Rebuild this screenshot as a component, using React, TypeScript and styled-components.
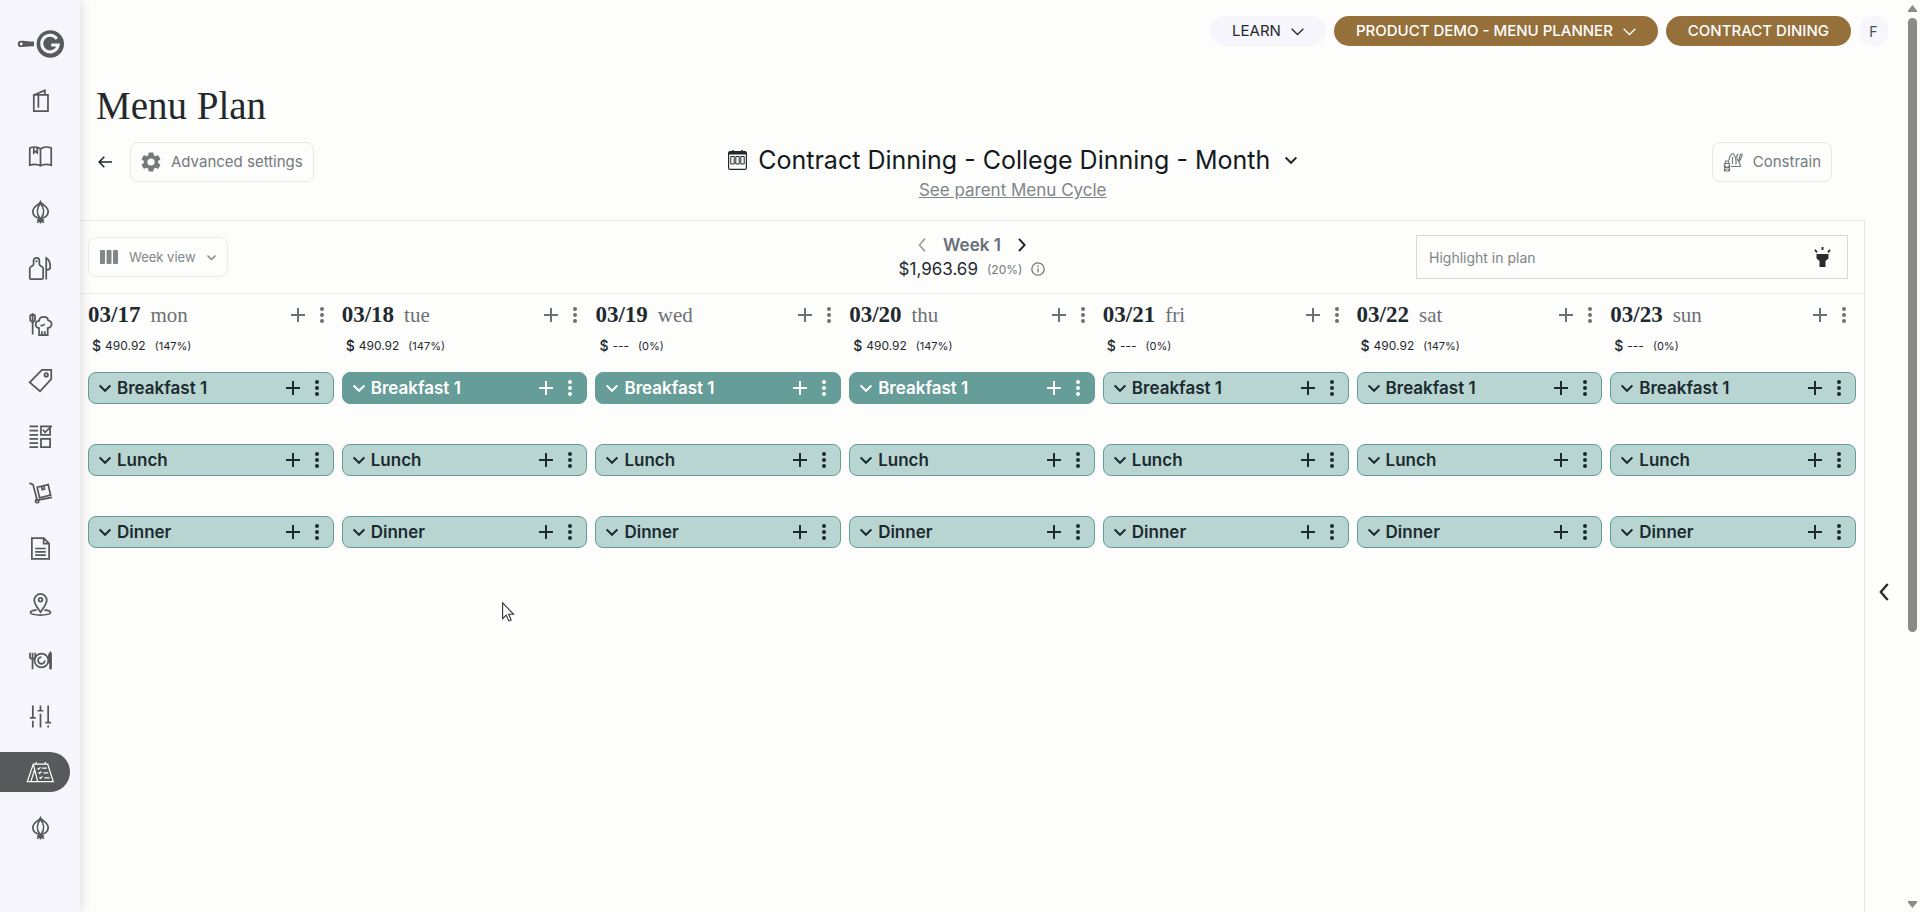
import React from "react";
import styled, { createGlobalStyle, css } from "styled-components";

const sans = `Inter, "Liberation Sans", sans-serif`;
const serif = `"Liberation Serif", "DejaVu Serif", serif`;

const GlobalStyle = createGlobalStyle`
  *, *::before, *::after { box-sizing: border-box; }
  body { margin: 0; background: #fdfdfc; color: #1f2a30; font-family: ${sans}; }
  button, input, select { font-family: inherit; color: inherit; }
  button { background: none; border: 0; padding: 0; cursor: pointer; }
`;

/* ---------- icons ---------- */

const Stroke = styled.svg<{ $w?: number }>`
  display: block;
  flex: none;
  fill: none;
  stroke: currentColor;
  stroke-width: ${(p) => p.$w ?? 2};
`;

const Solid = styled.svg`
  display: block;
  flex: none;
  fill: currentColor;
`;

const ChevronDown = ({ size = 12, w = 2 }: { size?: number; w?: number }) => (
  <Stroke $w={w} width={size} height={size} viewBox="0 0 12 12" aria-hidden>
    <path d="M.6 3.4 6 8.8l5.4-5.4" />
  </Stroke>
);

const ChevronLeft = ({ height = 14, w = 1.6 }: { height?: number; w?: number }) => (
  <Stroke $w={w} width={height / 2 + 1} height={height} viewBox="0 0 8 14" aria-hidden>
    <path d="M7 .6 1.4 7 7 13.4" />
  </Stroke>
);

const ChevronRight = () => (
  <Stroke $w={2} width={8} height={14} viewBox="0 0 8 14" aria-hidden>
    <path d="M1 .8 6.600 7 1 13.200" />
  </Stroke>
);

const Plus = () => (
  <Stroke $w={2} width={14} height={14} viewBox="0 0 14 14" aria-hidden>
    <path d="M7 0v14M0 7h14" />
  </Stroke>
);

const Dots = () => (
  <Solid width={4} height={16} viewBox="0 0 4 16" aria-hidden>
    <circle cx="2" cy="2" r="2" />
    <circle cx="2" cy="8" r="2" />
    <circle cx="2" cy="14" r="2" />
  </Solid>
);

const onion = (
  <>
    <path d="M12 .8C10.400 4 4 5.600 4 11c0 4 3.300 7 8 7s8-3 8-7c0-5.400-6.400-7-8-10.200z" />
    <path d="M12 2.500c-4 4.500-4.200 10.500-.8 15.500M12 2.500c4 4.500 4.200 10.500.8 15.500" />
    <path d="M12 17.500V23.500M8.500 22.500l3.500-3 3.500 3M8.500 19.800h7" />
  </>
);

const navItems: { name: string; icon: React.ReactNode }[] = [
  {
    name: "Menus",
    icon: <path d="M5 6.200h14.800V23H5zM9.800 6.500v13M5 6.200 16.500 1.400V6" />,
  },
  {
    name: "Cookbooks",
    icon: (
      <>
        <path d="M12 4.200C9 1.800 4 1.800.8 3.200V21c3.200-1 8.200-1 11.200.6 3-1.600 8-1.600 11.200-.6V3.200C20 1.800 15 1.800 12 4.200zM12 4.200V21.500" />
        <path d="M5 2.800v5.400l1.800-1.500 1.800 1.500V2.600" />
      </>
    ),
  },
  { name: "Ingredients", icon: onion },
  {
    name: "Preparation",
    icon: (
      <>
        <path d="M2.500 23.200c-1 0-1.700-.5-1.700-1.500V12c0-2 4-2.500 4-4.500V3.600c0-3.600 6-3.600 6 0v3.900c0 2 4 2.500 4 4.500v9.700c0 1-.7 1.500-1.700 1.500z" />
        <path d="M7.800 3.500v2M18 23.500V1c2.900 1.500 4.200 5 4.200 9.500 0 2-1 3-3.700 3" />
      </>
    ),
  },
  {
    name: "Recipes",
    icon: (
      <>
        <path d="M3.800 10v12.500M1.300 2.500v5.200l2.500 2.300 2.500-2.300V2.500L3.800 1zM3.800 2v7" />
        <path d="M10.500 23.200v-7.500c-4.500-.5-5-7 0-7.500.5-5.500 9-5.500 9.500-.5 5 1 4.500 7.500-.5 8v7.500zM13.500 19v4M16.500 19v4M12 13c2.200.5 3.600-.4 4.200-1.800" />
      </>
    ),
  },
  {
    name: "Prices",
    icon: (
      <>
        <path d="M.8 14 13.500 1H23.200v9.500L11.500 23.200z" />
        <circle cx="18" cy="6.200" r="1.800" />
      </>
    ),
  },
  {
    name: "Inventory",
    icon: (
      <>
        <path d="M.5 1.500h9M.5 5.800h9M.5 10.200h9M.5 14.500h9M.5 18.800h9M.5 23h9M12.500 1.500h9.500v8.700h-9.500zM12.500 14.500h9.500V23h-9.500z" />
        <path d="m14.500 5 2.300 2.600L23.800.8" />
      </>
    ),
  },
  {
    name: "Orders",
    icon: (
      <>
        <path d="M.5 2.200 4.200 3.800 8.500 20 24 17" />
        <circle cx="8.500" cy="21" r="1.700" />
        <path d="m8.500 6.500 11.500-2.700 2.500 11-11.500 2.700zM13 5.500l.8 3.600 2.400-.6-.8-3.500" />
      </>
    ),
  },
  {
    name: "Reports",
    icon: <path d="M3 1.200h12.500L21 7v15.800H3zM15.300 1.200V7H21M6.500 12h11M6.500 15.500h11M6.500 19h11" />,
  },
  {
    name: "Locations",
    icon: (
      <>
        <path d="M12 20C9.500 16 5.500 11.800 5.500 7.500a6.500 6.500 0 0 1 13 0c0 4.300-4 8.500-6.500 12.500z" />
        <circle cx="12" cy="7" r="2" />
        <path d="M8 17.500c-9.500 1-9 5.500 4 5.500s13.500-4.500 4-5.500" />
      </>
    ),
  },
  {
    name: "Catering",
    icon: (
      <>
        <circle cx="13" cy="12" r="7.200" />
        <path d="M13 8.500a3.500 3.500 0 1 0 3.500 3.500" />
        <path d="M1 4v4.500c0 2 5.500 2 5.500 0V4M3.700 4v17M22 21V4c-1.500 1.500-1.800 5-1.200 10H22M23 4v17" />
      </>
    ),
  },
  {
    name: "Settings",
    icon: <path d="M4 .5v12M1 13.500h6M4 16.500v7M12 .5v5.500M9 6h6M12 9v14.500M20 .5v17M17 18.500h6M20 21.500v2" />,
  },
  {
    name: "Menu planner",
    icon: (
      <>
        <path d="M4.500 3.200H19.500L25.300 21.500H-1.800zM4.500 3.200 9 21.500M2 21.500 5.800 9M7.500 1v3M17 1v3" />
        <path d="m9 7.500 1 1 2-2M13.500 7.500h5M10 12l1 1 2-2M15 12.500h5M11 17l1 1 2-2M16 17.500h5.500" />
      </>
    ),
  },
  { name: "Products", icon: onion },
];

/* ---------- shell ---------- */

const Page = styled.div`
  display: flex;
  min-height: 100vh;
  border-bottom: 1px solid #33373a;
`;

const Sidebar = styled.nav`
  flex: 0 0 80px;
  background: #f6f6fc;
  box-shadow: 2px 0 10px rgba(40, 50, 50, 0.14);
  padding: 30px 0 0;
  z-index: 1;
`;

const Logo = styled.a`
  display: block;
  color: #58595b;
  padding-left: 17px;
  height: 50px;
`;

const NavList = styled.ul`
  list-style: none;
  margin: 0;
  padding: 0;
  display: flex;
  flex-direction: column;
  gap: 16px;
`;

const NavLink = styled.a<{ $active: boolean }>`
  display: flex;
  align-items: center;
  width: 70px;
  height: 40px;
  padding-left: 29px;
  border-radius: 0 20px 20px 0;
  color: ${(p) => (p.$active ? "#ffffff" : "#55575a")};
  background: ${(p) => (p.$active ? "#58595b" : "transparent")};
`;

const Main = styled.main`
  flex: 1;
  min-width: 0;
  display: flex;
  flex-direction: column;
`;

const TopBar = styled.header`
  display: flex;
  justify-content: flex-end;
  gap: 8px;
  padding: 16px 20px 0 0;
`;

const Pill = styled.button<{ $tone?: "brown" }>`
  display: flex;
  align-items: center;
  gap: 10px;
  height: 30px;
  padding: 0 22px;
  border-radius: 15px;
  font-size: 15px;
  line-height: 20px;
  font-weight: 400;
  color: #24292c;
  background: #f6f6fc;
  ${(p) =>
    p.$tone === "brown" &&
    css`
      color: #ffffff;
      background: #96703a;
      font-weight: 500;
    `}
`;

const Avatar = styled.button`
  width: 29px;
  height: 30px;
  border-radius: 15px;
  background: #f6f6fc;
  color: #4a4f52;
  font-size: 14px;
`;

const PageTitle = styled.h1`
  margin: 36px 0 0;
  padding-left: 16px;
  font: 400 39px/48px ${serif};
  color: #23282c;
`;

const PlanHeader = styled.div`
  display: flex;
  justify-content: space-between;
  align-items: flex-start;
  height: 90px;
  padding: 12px 76px 0 18px;
`;

const HeaderGroup = styled.div`
  display: flex;
  align-items: center;
  gap: 18px;
`;

const OutlineButton = styled.button`
  display: flex;
  align-items: center;
  gap: 10px;
  height: 40px;
  padding: 0 10px;
  border: 1px solid #e6e7eb;
  border-radius: 8px;
  font-size: 15px;
  line-height: 20px;
  color: #74797c;
`;

const PlanTitle = styled.div`
  display: flex;
  flex-direction: column;
  align-items: center;
  gap: 4px;
`;

const PlanPicker = styled.label`
  display: flex;
  align-items: center;
  gap: 11px;
  padding-top: 2px;
  color: #23282c;
`;

const PlainSelect = styled.select`
  appearance: none;
  border: 0;
  background: none;
  padding: 0;
  outline: 0;
  font-size: inherit;
  line-height: inherit;
`;

const PlanSelect = styled(PlainSelect)`
  font-size: 25px;
  line-height: 32px;
  color: #14191d;
  margin-right: 3px;
`;

const ParentLink = styled.a`
  font-size: 17px;
  line-height: 20px;
  color: #80868a;
`;

/* ---------- plan body ---------- */

const Body = styled.div`
  flex: 1;
  display: flex;
`;

const Plan = styled.section`
  flex: 1;
  min-width: 0;
  border-top: 1px solid #e8e9ec;
  border-right: 1px solid #e5e6ea;
`;

const PanelRail = styled.aside`
  flex: 0 0 43px;
  display: flex;
  align-items: center;
  padding: 52px 0 0 6px;
`;

const RailButton = styled.button`
  padding: 8px;
  color: #222729;
`;

const Toolbar = styled.div`
  display: grid;
  grid-template-columns: 1fr auto 1fr;
  height: 73px;
  padding: 14px 8px 0;
  border-bottom: 1px solid #ecedef;
`;

const ViewPicker = styled.label`
  display: flex;
  align-items: center;
  gap: 11px;
  justify-self: start;
  height: 40px;
  padding: 0 11px;
  margin-top: 2px;
  border: 1px solid #e9ebf1;
  border-radius: 8px;
  font-size: 13px;
  line-height: 16px;
  color: #81868a;
`;

const WeekSummary = styled.div`
  display: flex;
  flex-direction: column;
  align-items: center;
`;

const WeekNav = styled.div`
  display: flex;
  align-items: center;
  gap: 17px;
  height: 20px;
  font-size: 17px;
  font-weight: 600;
  color: #667077;
`;

const ArrowButton = styled.button<{ $dim?: boolean }>`
  color: ${(p) => (p.$dim ? "#9a9fa3" : "#23282c")};
`;

const Cost = styled.div`
  display: flex;
  align-items: center;
  gap: 9px;
  margin-top: 2px;
  height: 24px;
  font-size: 17px;
  color: #1f2a30;
`;

const Share = styled.span`
  display: flex;
  align-items: center;
  gap: 9px;
  font-size: 12px;
  color: #70777b;
`;

const SearchBox = styled.div`
  display: flex;
  align-items: center;
  justify-self: end;
  width: 432px;
  max-width: 100%;
  height: 44px;
  margin-right: 8px;
  padding: 0 16px 0 12px;
  border: 1px solid #d9dadb;
`;

const SearchInput = styled.input`
  flex: 1;
  min-width: 0;
  border: 0;
  padding: 0;
  background: none;
  outline: 0;
  font-size: 14px;
  &::placeholder { color: #7f8487; opacity: 1; }
`;

const SearchButton = styled.button`
  color: #2a2c2e;
`;

const Days = styled.div`
  display: grid;
  grid-template-columns: repeat(7, minmax(0, 1fr));
  gap: 8px;
  padding: 7px 8px 0;
`;

const DayHead = styled.div`
  display: flex;
  align-items: center;
  height: 28px;
  padding-right: 10px;
  color: #6b7175;
  font-family: ${serif};
`;

const DayDate = styled.span`
  font-size: 23px;
  font-weight: 700;
  color: #1f2a30;
`;

const DayName = styled.span`
  flex: 1;
  padding-left: 10px;
  font-size: 21px;
`;

const Tools = styled.span`
  display: flex;
  align-items: center;
  gap: 15px;
`;

const DayCost = styled.div`
  display: flex;
  align-items: center;
  gap: 4px;
  height: 16px;
  margin: 9px 0 18px;
  padding-left: 4px;
  font-size: 12px;
  line-height: 16px;
`;

const Currency = styled.span`
  font-size: 14px;
  font-weight: 500;
`;

const DayShare = styled.span`
  padding-left: 5px;
  font-size: 11px;
`;

const Meals = styled.div`
  display: flex;
  flex-direction: column;
  gap: 40px;
`;

const MealBar = styled.div<{ $selected: boolean }>`
  display: flex;
  align-items: center;
  height: 32px;
  padding: 0 14px 0 10px;
  border: 1px solid #659d97;
  border-radius: 8px;
  background: ${(p) => (p.$selected ? "#679d98" : "#b9d5d2")};
  color: ${(p) => (p.$selected ? "#ffffff" : "#1c2b30")};
`;

const MealToggle = styled.button`
  flex: 1;
  display: flex;
  align-items: center;
  gap: 6px;
  font-size: 17px;
  line-height: 20px;
  font-weight: 600;
`;

const Scrollbar = styled.div`
  flex: 0 0 12px;
  height: 100vh;
  display: flex;
  flex-direction: column;
  color: #8b8b8c;
  padding: 5px 3px 4px 0;
`;

const Track = styled.div`
  flex: 1;
  padding: 6px 0;
`;

const Thumb = styled.div`
  height: 70%;
  border-radius: 5px;
  background: #8b8b8c;
`;

const Pointer = styled.svg`
  position: absolute;
  left: 502px;
  top: 602px;
`;

const days = [
  { date: "03/17", day: "mon", cost: "490.92", share: "(147%)" },
  { date: "03/18", day: "tue", cost: "490.92", share: "(147%)", selected: true },
  { date: "03/19", day: "wed", cost: "---", share: "(0%)", selected: true },
  { date: "03/20", day: "thu", cost: "490.92", share: "(147%)", selected: true },
  { date: "03/21", day: "fri", cost: "---", share: "(0%)" },
  { date: "03/22", day: "sat", cost: "490.92", share: "(147%)" },
  { date: "03/23", day: "sun", cost: "---", share: "(0%)" },
];

const meals = ["Breakfast 1", "Lunch", "Dinner"];

const ItemTools = ({ of }: { of: string }) => (
  <Tools>
    <button aria-label={`Add to ${of}`}><Plus /></button>
    <button aria-label={`More for ${of}`}><Dots /></button>
  </Tools>
);

export default function App() {
  return (
    <>
      <GlobalStyle />
      <Page>
        <Sidebar aria-label="Main">
          <Logo href="#" aria-label="Home">
            <svg width="47" height="28" viewBox="0 0 47 28" aria-hidden>
              <path
                fill="currentColor"
                fillRule="evenodd"
                d="M4 10.700c3 0 6 .7 13 .8v4.800c-7 .1-10 .8-13 .8a3.200 3.200 0 0 1 0-6.400zm.2 1.900a1.400 1.400 0 1 0 0 2.800 1.400 1.400 0 0 0 0-2.800z"
              />
              <circle cx="33.300" cy="14" r="13.700" fill="currentColor" />
              <path
                d="M39.800 8.800A8.300 8.300 0 1 0 41.200 15H34.200"
                fill="none"
                stroke="#f6f6fc"
                strokeWidth="3"
              />
            </svg>
          </Logo>
          <NavList>
            {navItems.map((item) => (
              <li key={item.name}>
                <NavLink href="#" aria-label={item.name} $active={item.name === "Menu planner"}>
                  <Stroke
                    $w={item.name === "Menu planner" ? 1.3 : 1.8}
                    width={23}
                    height={23}
                    viewBox="0 0 24 24"
                    overflow="visible"
                    aria-hidden
                  >
                    {item.icon}
                  </Stroke>
                </NavLink>
              </li>
            ))}
          </NavList>
        </Sidebar>

        <Main>
          <TopBar>
            <Pill>LEARN <ChevronDown size={13} w={1.2} /></Pill>
            <Pill $tone="brown">PRODUCT DEMO - MENU PLANNER <ChevronDown size={13} w={1.2} /></Pill>
            <Pill $tone="brown">CONTRACT DINING</Pill>
            <Avatar aria-label="Account F">F</Avatar>
          </TopBar>

          <PageTitle>Menu Plan</PageTitle>

          <PlanHeader>
            <HeaderGroup>
              <button aria-label="Back">
                <Stroke $w={1.6} width={14} height={12} viewBox="0 0 14 12" aria-hidden>
                  <path d="M14 6H1.200M6.300.8 1.200 6l5.100 5.200" />
                </Stroke>
              </button>
              <OutlineButton>
                <Solid width={20} height={20} viewBox="2 2 20 20" aria-hidden>
                  <path d="M19.140 12.940c.04-.3.060-.61.060-.94s-.02-.64-.07-.94l2.030-1.580a.49.49 0 0 0 .12-.61l-1.920-3.320a.49.49 0 0 0-.59-.22l-2.390.96a7 7 0 0 0-1.620-.94l-.36-2.540a.48.48 0 0 0-.48-.41h-3.840a.48.48 0 0 0-.47.41l-.36 2.540c-.59.24-1.130.57-1.620.94l-2.390-.96a.48.48 0 0 0-.59.22L2.740 8.870a.48.48 0 0 0 .12.610l2.030 1.580c-.05.3-.09.63-.09.940s.02.64.07.940l-2.030 1.580a.49.49 0 0 0-.12.610l1.920 3.320c.12.220.37.290.59.220l2.390-.96c.5.380 1.030.7 1.620.940l.36 2.540c.05.240.240.410.480.410h3.840c.240 0 .440-.17.470-.41l.36-2.540a7 7 0 0 0 1.620-.94l2.390.96c.22.080.470 0 .59-.22l1.920-3.320a.48.48 0 0 0-.12-.61zM12 15.600a3.600 3.600 0 1 1 0-7.200 3.600 3.600 0 0 1 0 7.200z" />
                </Solid>
                Advanced settings
              </OutlineButton>
            </HeaderGroup>

            <PlanTitle>
              <PlanPicker>
                <svg width="19" height="20" viewBox="0 0 19 20" fill="none" stroke="currentColor" aria-hidden>
                  <rect x=".6" y="1.600" width="17.800" height="17.800" rx="1.500" strokeWidth="1.200" />
                  <path d="M1 3h17" strokeWidth="3" />
                  <path d="M5 0v2M14 0v2" strokeWidth="1.500" />
                  <path d="M2.800 6.500h3.400v7.500H2.800zM7.800 6.500h3.400v7.500H7.800zM12.800 6.500h3.400v7.500h-3.400z" strokeWidth="1" />
                </svg>
                <PlanSelect aria-label="Menu plan">
                  <option>Contract Dinning - College Dinning - Month</option>
                </PlanSelect>
                <ChevronDown size={12} />
              </PlanPicker>
              <ParentLink href="#">See parent Menu Cycle</ParentLink>
            </PlanTitle>

            <OutlineButton>
              <Stroke $w={1.2} width={20} height={20} viewBox="0 0 20 20" aria-hidden>
                <path d="M1.500 11.500h5V19h-5zM2.500 11.500V9h3v2.500M2 14l4 4M6 14l-4 4" />
                <path d="M6 8.500C6 5 8.500 1.500 9.500 1.500S13 5 13 8.500v4M9.500 5v7M8 14.500h9.500c-.5-4-2.500-6-3.500-8" />
                <path d="M14 6c-.8-2 0-3.500 1.500-4M16.500 9.500c-1-3 .5-4.500.5-6.500M17 3c2-2 2.500 0 1.500 2l-2 4" />
              </Stroke>
              Constrain
            </OutlineButton>
          </PlanHeader>

          <Body>
            <Plan>
              <Toolbar>
                <ViewPicker>
                  <Solid width={18} height={14} viewBox="0 0 18 14" aria-hidden>
                    <rect width="5" height="14" rx="1" />
                    <rect x="6.500" width="5" height="14" rx="1" />
                    <rect x="13" width="5" height="14" rx="1" />
                  </Solid>
                  <PlainSelect aria-label="View">
                    <option>Week view</option>
                  </PlainSelect>
                  <ChevronDown size={9} w={1.8} />
                </ViewPicker>
                <WeekSummary>
                  <WeekNav>
                    <ArrowButton $dim aria-label="Previous week"><ChevronLeft /></ArrowButton>
                    Week 1
                    <ArrowButton aria-label="Next week"><ChevronRight /></ArrowButton>
                  </WeekNav>
                  <Cost>
                    $1,963.69
                    <Share>
                      (20%)
                      <Stroke $w={1.3} width={14} height={14} viewBox="0 0 14 14" aria-hidden>
                        <circle cx="7" cy="7" r="6.200" />
                        <path d="M7 6.200V10.500M7 3.600V5" />
                      </Stroke>
                    </Share>
                  </Cost>
                </WeekSummary>
                <SearchBox>
                  <SearchInput aria-label="Highlight in plan" placeholder="Highlight in plan" />
                  <SearchButton aria-label="Highlight">
                    <Solid width={17} height={20} viewBox="0 0 17 20" aria-hidden>
                      <path d="M7.500 0h2v3h-2zM.2 3.300 1.600 2.200 3.700 4.800 2.300 6zM16.800 3.300l-1.400-1.100-2.100 2.600L14.700 6zM2.500 7h12v4.500L11.500 14v6h-6v-6l-3-2.500z" />
                    </Solid>
                  </SearchButton>
                </SearchBox>
              </Toolbar>

              <Days>
                {days.map((d) => (
                  <section key={d.date}>
                    <DayHead>
                      <DayDate>{d.date}</DayDate>
                      <DayName>{d.day}</DayName>
                      <ItemTools of={d.date} />
                    </DayHead>
                    <DayCost>
                      <Currency>$</Currency>
                      <span>{d.cost}</span>
                      <DayShare>{d.share}</DayShare>
                    </DayCost>
                    <Meals>
                      {meals.map((meal, i) => (
                        <MealBar key={meal} $selected={i === 0 && !!d.selected}>
                          <MealToggle>
                            <ChevronDown size={12} />
                            {meal}
                          </MealToggle>
                          <ItemTools of={`${meal} ${d.date}`} />
                        </MealBar>
                      ))}
                    </Meals>
                  </section>
                ))}
              </Days>
            </Plan>
            <PanelRail>
              <RailButton aria-label="Open panel"><ChevronLeft height={18} w={1.8} /></RailButton>
            </PanelRail>
          </Body>
        </Main>

        <Scrollbar aria-hidden>
          <Solid width={9} height={7} viewBox="0 0 9 7"><path d="M4.500 0 9 5.500V7H0V5.500z" /></Solid>
          <Track><Thumb /></Track>
          <Solid width={9} height={7} viewBox="0 0 9 7"><path d="M4.500 7 9 1.500V0H0v1.500z" /></Solid>
        </Scrollbar>
      </Page>
      <Pointer width="13" height="20" viewBox="0 0 13 20" aria-hidden>
        <path
          d="M.6.8v15.800l3.600-3.400 2.700 5.700 2.300-1-2.600-5.600h5z"
          fill="#ffffff"
          stroke="#30343a"
          strokeWidth="1.100"
        />
      </Pointer>
    </>
  );
}
